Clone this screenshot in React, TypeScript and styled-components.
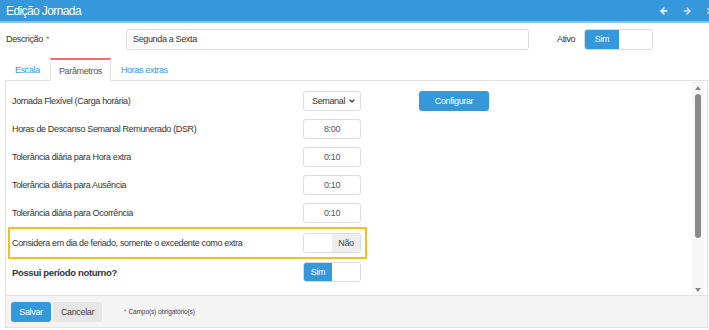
import React from 'react';
import styled, { createGlobalStyle } from 'styled-components';
import { ArrowLeft, ArrowRight, X, ChevronDown } from 'lucide-react';

const GlobalStyle = createGlobalStyle`
    body {
        margin: 0;
        background: #fff;
        font-family: "Liberation Sans", Arial, sans-serif;
        color: #333;
        letter-spacing: -0.35px;
    }
`;

const Window = styled('div')`
    width: 709px;
    height: 330px;
    display: flex;
    flex-direction: column;
    overflow: hidden;
    background: #fff;
`;

const Header = styled('div')`
    height: 21px;
    flex: none;
    display: flex;
    align-items: center;
    background: #3498db;
    border-bottom: 2px solid #8cc4ec;
    color: #fff;
    padding-left: 6px;
`;

const Title = styled('span')`
    font-size: 12px;
    letter-spacing: -0.6px;
    flex: 1;
`;

const HeaderIcons = styled('div')`
    display: flex;
    align-items: center;
    gap: 13px;
    margin-right: -6px;
`;

const DescRow = styled('div')`
    display: flex;
    align-items: center;
    height: 22px;
    margin-top: 5px;
    padding-left: 6px;
    font-size: 9px;
`;

const Label = styled('span')<{ width?: number }>`
    width: ${p => (p.width ? `${p.width}px` : 'auto')};
    flex: none;
    color: #333;
`;

const Required = styled('span')`
    color: #e74c3c;
    margin-left: 3px;
`;

const TextInput = styled('div')`
    width: 395px;
    height: 19px;
    border: 1px solid #dcdcdc;
    border-radius: 3px;
    display: flex;
    align-items: center;
    padding-left: 6px;
    color: #333;
    margin-right: 28px;
`;

const Toggle = styled('div')<{ width: number; height: number }>`
    width: ${p => p.width}px;
    height: ${p => p.height}px;
    border: 1px solid #dcdcdc;
    border-radius: 3px;
    display: flex;
    overflow: hidden;
    box-sizing: border-box;
    flex: none;
`;

const ToggleHalf = styled('div')<{ kind: 'on' | 'off' | 'blank' }>`
    flex: 1;
    display: flex;
    align-items: center;
    justify-content: center;
    font-size: 9px;
    background: ${p => (p.kind === 'on' ? '#3498db' : p.kind === 'off' ? '#eeeeee' : '#fff')};
    color: ${p => (p.kind === 'on' ? '#fff' : '#444')};
`;

const Tabs = styled('div')`
    display: flex;
    align-items: flex-end;
    height: 23px;
    margin-top: 7px;
    padding-left: 5px;
    font-size: 9px;
`;

const Tab = styled('div')<{ active?: boolean }>`
    height: 23px;
    box-sizing: border-box;
    display: flex;
    align-items: center;
    padding: 0 ${p => (p.active ? '8px' : '9px')};
    color: ${p => (p.active ? '#555' : '#3498db')};
    background: #fff;
    border: 1px solid ${p => (p.active ? '#e2e2e2' : 'transparent')};
    border-top: 2px solid ${p => (p.active ? '#f36c6c' : 'transparent')};
    border-bottom: none;
    margin-bottom: ${p => (p.active ? '-1px' : '0')};
    position: relative;
`;

const Panel = styled('div')`
    margin-left: 5px;
    width: 703px;
    height: 216px;
    box-sizing: border-box;
    border: 1px solid #e2e2e2;
    display: flex;
    flex: none;
`;

const Body = styled('div')`
    flex: 1;
    padding-top: 6px;
    display: flex;
    flex-direction: column;
    font-size: 9px;
`;

const Row = styled('div')<{ height?: number }>`
    height: ${p => p.height ?? 28}px;
    display: flex;
    align-items: center;
    padding-left: 6px;
    flex: none;
`;

const RowLabel = styled('span')<{ bold?: boolean; width?: number }>`
    width: ${p => p.width ?? 291}px;
    flex: none;
    font-weight: ${p => (p.bold ? 700 : 400)};
    font-size: ${p => (p.bold ? '9.5px' : '9px')};
    color: #333;
`;

const Highlight = styled('div')`
    margin-left: 2px;
    width: 359px;
    height: 32px;
    box-sizing: border-box;
    border: 2px solid #f7bd22;
    display: flex;
    align-items: center;
    padding-left: 2px;
    flex: none;
`;

const SmallBox = styled('div')`
    width: 58px;
    height: 20px;
    box-sizing: border-box;
    border: 1px solid #dcdcdc;
    border-radius: 3px;
    display: flex;
    align-items: center;
    justify-content: center;
    color: #555;
    flex: none;
`;

const SelectBox = styled(SmallBox)`
    justify-content: space-between;
    padding: 0 4px 0 8px;
    color: #333;
`;

const Spacer = styled('div')<{ width: number }>`
    width: ${p => p.width}px;
    flex: none;
`;

const BlueButton = styled('div')<{ width: number }>`
    width: ${p => p.width}px;
    height: 20px;
    border-radius: 3px;
    background: #3498db;
    color: #fff;
    display: flex;
    align-items: center;
    justify-content: center;
    font-size: 9px;
    flex: none;
`;

const GreyButton = styled(BlueButton)`
    background: #e6e6e6;
    color: #444;
`;

const ScrollTrack = styled('div')`
    width: 12px;
    margin-right: 3px;
    background: #f7f7f7;
    display: flex;
    flex-direction: column;
    align-items: center;
`;

const Arrow = styled('div')<{ up?: boolean }>`
    width: 0;
    height: 0;
    border-left: 3px solid transparent;
    border-right: 3px solid transparent;
    ${p => (p.up ? 'border-bottom: 4px solid #888;' : 'border-top: 4px solid #888;')}
    margin: ${p => (p.up ? '5px 0 4px' : 'auto 0 3px')};
`;

const Thumb = styled('div')`
    width: 6px;
    height: 144px;
    border-radius: 3px;
    background: #8a8a8a;
`;

const Footer = styled('div')`
    margin-left: 5px;
    width: 703px;
    height: 32px;
    box-sizing: border-box;
    background: #f4f4f4;
    border: 1px solid #e2e2e2;
    border-top: none;
    display: flex;
    align-items: center;
    padding-left: 5px;
    gap: 2px;
    flex: none;
`;

const Note = styled('span')`
    font-size: 6.5px;
    letter-spacing: -0.1px;
    color: #444;
    margin-left: 20px;
`;

const App = () => {
    const params = [
        { label: 'Horas de Descanso Semanal Remunerado (DSR)', value: '8:00' },
        { label: 'Tolerância diária para Hora extra', value: '0:10' },
        { label: 'Tolerância diária para Ausência', value: '0:10' },
        { label: 'Tolerância diária para Ocorrência', value: '0:10' },
    ];

    return (
        <Window>
            <GlobalStyle />
            <Header>
                <Title>Edição Jornada</Title>
                <HeaderIcons>
                    <ArrowLeft size={10} strokeWidth={3.5} />
                    <ArrowRight size={10} strokeWidth={3.5} color="#cfe6f7" />
                    <X size={10} strokeWidth={2.5} />
                </HeaderIcons>
            </Header>

            <DescRow>
                <Label width={120}>
                    Descrição<Required>*</Required>
                </Label>
                <TextInput>Segunda a Sexta</TextInput>
                <Label width={27}>Ativo</Label>
                <Toggle width={69} height={21}>
                    <ToggleHalf kind="on" style={{ flex: 'none', width: 34 }}>Sim</ToggleHalf>
                    <ToggleHalf kind="blank" />
                </Toggle>
            </DescRow>

            <Tabs>
                <Tab>Escala</Tab>
                <Tab active>Parâmetros</Tab>
                <Tab>Horas extras</Tab>
            </Tabs>

            <Panel>
                <Body>
                    <Row>
                        <RowLabel>Jornada Flexível (Carga horária)</RowLabel>
                        <SelectBox>
                            Semanal
                            <ChevronDown size={8} strokeWidth={3.5} />
                        </SelectBox>
                        <Spacer width={58} />
                        <BlueButton width={70}>Configurar</BlueButton>
                    </Row>
                    {params.map(p => (
                        <Row key={p.label}>
                            <RowLabel>{p.label}</RowLabel>
                            <SmallBox>{p.value}</SmallBox>
                        </Row>
                    ))}
                    <Highlight>
                        <RowLabel>
                            Considera em dia de feriado, somente o excedente como extra
                        </RowLabel>
                        <Toggle width={58} height={20}>
                            <ToggleHalf kind="blank" />
                            <ToggleHalf kind="off">Não</ToggleHalf>
                        </Toggle>
                    </Highlight>
                    <Row height={26}>
                        <RowLabel bold>Possui período noturno?</RowLabel>
                        <Toggle width={58} height={20}>
                            <ToggleHalf kind="on">Sim</ToggleHalf>
                            <ToggleHalf kind="blank" />
                        </Toggle>
                    </Row>
                </Body>
                <ScrollTrack>
                    <Arrow up />
                    <Thumb />
                    <Arrow />
                </ScrollTrack>
            </Panel>

            <Footer>
                <BlueButton width={40}>Salvar</BlueButton>
                <GreyButton width={49}>Cancelar</GreyButton>
                <Note>
                    <Required style={{ marginLeft: 0, marginRight: 2 }}>*</Required>
                    Campo(s) obrigatório(s)
                </Note>
            </Footer>
        </Window>
    );
};

export default App;
